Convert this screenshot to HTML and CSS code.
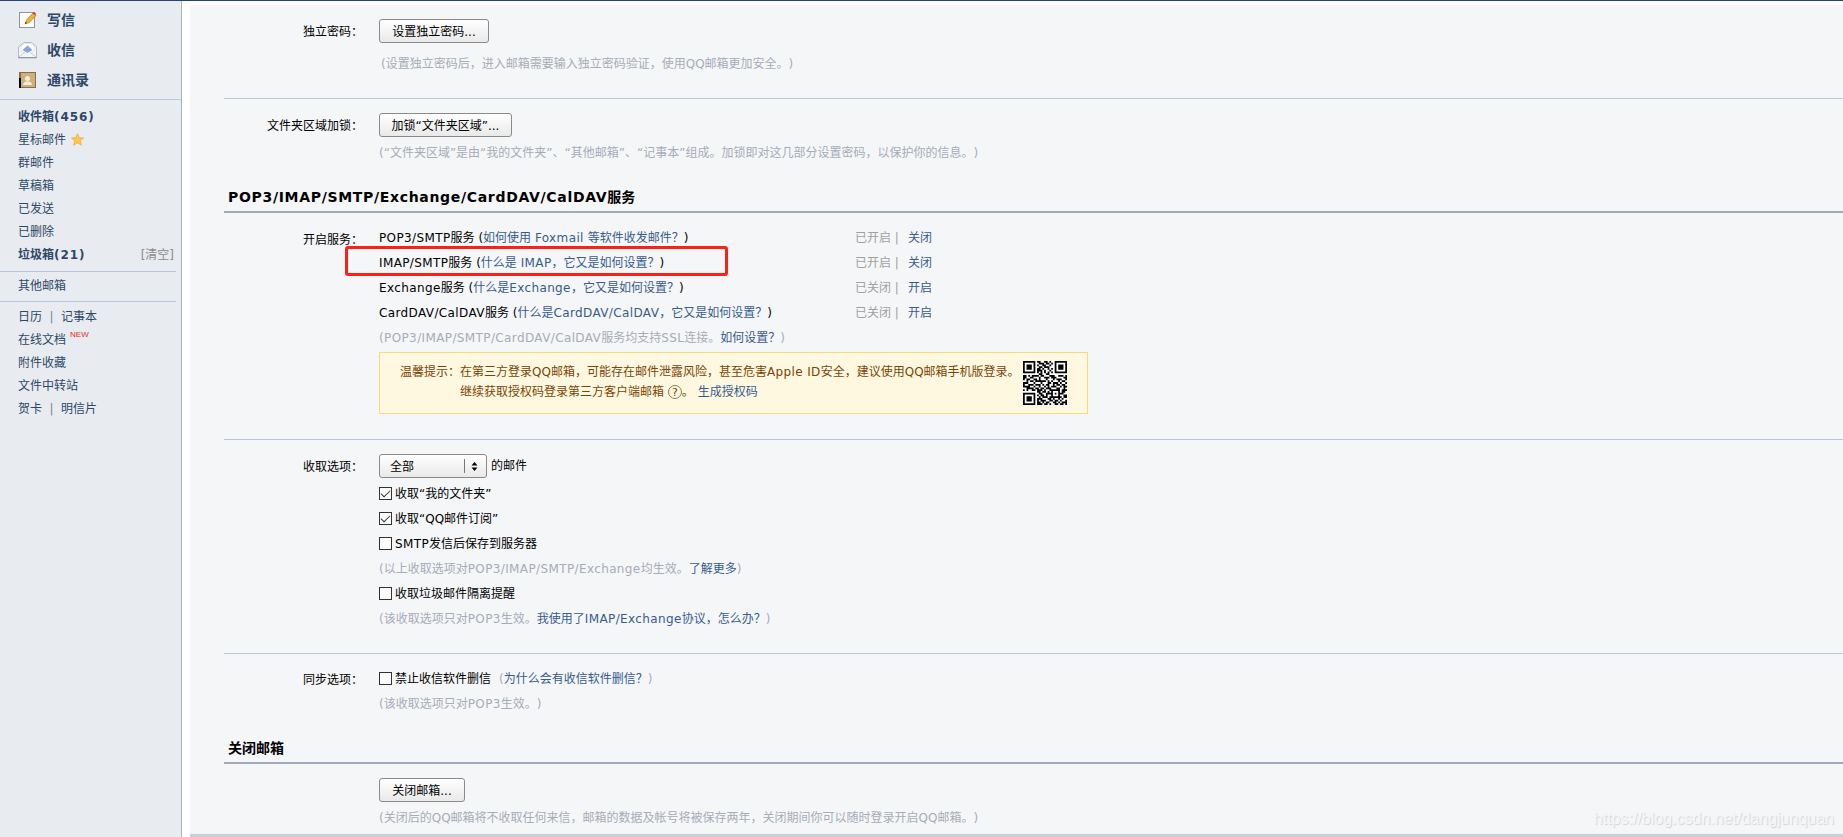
FILE: index.html
```html
<!DOCTYPE html>
<html lang="zh-CN">
<head>
  <meta charset="UTF-8">
  <title>QQ邮箱 - 设置</title>
  <link rel="stylesheet" href="styles.css">
</head>
<body>

  <div class="page">
    <div class="sidebar">
      <ul class="nav-main">
        <li>
          <svg width="20" height="18" viewBox="0 0 20 18">
            <rect x="1.5" y="1.5" width="15" height="15" fill="#fdfdfd" stroke="#8f959c"/>
            <path d="M7 13l1.500-4 6.500-7 3 2.500-6.800 7z" fill="#f3b32c" stroke="#a9761d" stroke-width=".7"/>
            <path d="M14.500 2.500l1.200-1.500 2.500 1.500-1 2z" fill="#dc4444"/>
            <path d="M7 13l.6-2 1.400 1.100z" fill="#333"/>
          </svg>
          写信
        </li>
        <li>
          <svg width="20" height="18" viewBox="0 0 20 18">
            <path d="M.5 6L6 1.500h8L18.500 6v11H.5z" fill="#f4f6f8" stroke="#b4bac2"/>
            <path d="M3 5l4-2.500h6L16 5v5l-6 3.500L3 10z" fill="#fff" stroke="#d5dae0" stroke-width=".6"/>
            <path d="M4.500 9L9.500 4.500 14.500 9l-5 3z" fill="#86a8d6"/>
            <path d="M.5 16.500h18" stroke="#8f979f"/>
            <path d="M1 16l6-5M18 16l-6-5" stroke="#c9ced5" fill="none"/>
          </svg>
          收信
        </li>
        <li>
          <svg width="20" height="18" viewBox="0 0 20 18">
            <rect x="1" y="1" width="17" height="16" fill="#866f4b"/>
            <rect x="3" y="2" width="14" height="14" fill="#cdb07a"/>
            <rect x="1" y="7" width="2" height="10" fill="#000"/>
            <circle cx="9.500" cy="7.500" r="2.500" fill="#f5ecd8"/>
            <path d="M5 14c0-2.500 1.500-3 3-3.500h3c1.500.5 3 1 3 3.500z" fill="#f5ecd8"/>
          </svg>
          通讯录
        </li>
      </ul>
      <ul class="nav-list">
        <li><b>收件箱<span class="num">(456)</span></b></li>
        <li>星标邮件
          <svg class="star" width="13" height="13" viewBox="0 0 13 13"><path d="M6.500.7l1.700 4 4.300.3-3.300 2.800 1.100 4.300-3.800-2.300-3.800 2.300 1.100-4.300L.5 5l4.300-.3z" fill="#fcc94b" stroke="#efa63c" stroke-width=".8"/></svg>
        </li>
        <li>群邮件</li>
        <li>草稿箱</li>
        <li>已发送</li>
        <li>已删除</li>
        <li><b>垃圾箱<span class="num">(21)</span></b><span class="clear">[清空]</span></li>
      </ul>
      <ul class="nav-list nav-other">
        <li>其他邮箱</li>
      </ul>
      <ul class="nav-list nav-tools">
        <li>日历<i>|</i>记事本</li>
        <li>在线文档<sup>NEW</sup></li>
        <li>附件收藏</li>
        <li>文件中转站</li>
        <li>贺卡<i>|</i>明信片</li>
      </ul>
    </div>

    <div class="main">
      <div class="section line">
        <div class="label">独立密码：</div>
        <div class="field">
          <button class="btn btn-pwd">设置独立密码...</button>
          <p class="hint hint-pwd">(设置独立密码后，进入邮箱需要输入独立密码验证，使用QQ邮箱更加安全。)</p>
        </div>
      </div>

      <div class="section">
        <div class="label">文件夹区域加锁：</div>
        <div class="field">
          <button class="btn btn-lock">加锁“文件夹区域”...</button>
          <p class="hint">(“文件夹区域”是由“我的文件夹”、“其他邮箱”、“记事本”组成。加锁即对这几部分设置密码，以保护你的信息。)</p>
        </div>
      </div>

      <h3><span class="en">POP3/IMAP/SMTP/Exchange/CardDAV/CalDAV</span>服务</h3>
      <div class="section service line">
        <div class="label">开启服务：</div>
        <div class="field">
          <div class="row"><div class="name"><span class="en">POP3/SMTP</span>服务 (<a>如何使用 <span class="en">Foxmail</span> 等软件收发邮件？</a>)</div><span class="state">已开启 |</span><a class="act">关闭</a></div>
          <div class="row marked"><div class="name"><span class="en">IMAP/SMTP</span>服务 (<a>什么是 <span class="en">IMAP</span>，它又是如何设置？</a>)</div><span class="state">已开启 |</span><a class="act">关闭</a></div>
          <div class="row"><div class="name"><span class="en">Exchange</span>服务 (<a>什么是<span class="en">Exchange</span>，它又是如何设置？</a>)</div><span class="state">已关闭 |</span><a class="act">开启</a></div>
          <div class="row"><div class="name"><span class="en">CardDAV/CalDAV</span>服务 (<a>什么是<span class="en">CardDAV/CalDAV</span>，它又是如何设置？</a>)</div><span class="state">已关闭 |</span><a class="act">开启</a></div>
          <div class="row gray"><span class="en">(POP3/IMAP/SMTP/CardDAV/CalDAV</span>服务均支持<span class="en">SSL</span>连接。<a>如何设置？</a>)</div>
          <div class="tips">
            <div>温馨提示：</div>
            <div class="tips-text">
              在第三方登录QQ邮箱，可能存在邮件泄露风险，甚至危害<span class="en">Apple ID</span>安全，建议使用QQ邮箱手机版登录。<br>
              继续获取授权码登录第三方客户端邮箱 <span class="help">?</span>。 <a>生成授权码</a>
            </div>
            <svg class="qr" id="qr" width="44" height="44" viewBox="0 0 25 25"></svg>
          </div>
        </div>
      </div>

      <div class="section receive line">
        <div class="label">收取选项：</div>
        <div class="field">
          <div class="select-row">
            <div class="select">
              <span>全部</span>
              <svg width="7" height="9" viewBox="0 0 7 9"><path d="M.5 3.500l3-3.500 3 3.500zM.5 5.500l3 3.500 3-3.500z"/></svg>
            </div>
            的邮件
          </div>
          <div class="row"><span class="check on"></span>收取“我的文件夹”</div>
          <div class="row"><span class="check on"></span>收取“QQ邮件订阅”</div>
          <div class="row"><span class="check"></span><span class="en">SMTP</span>发信后保存到服务器</div>
          <div class="row gray">(以上收取选项对<span class="en">POP3/IMAP/SMTP/Exchange</span>均生效。<a>了解更多</a>)</div>
          <div class="row"><span class="check"></span>收取垃圾邮件隔离提醒</div>
          <div class="row gray">(该收取选项只对<span class="en">POP3</span>生效。<a>我使用了<span class="en">IMAP/Exchange</span>协议，怎么办？</a>)</div>
        </div>
      </div>

      <div class="section sync">
        <div class="label">同步选项：</div>
        <div class="field">
          <div class="row"><span class="check"></span>禁止收信软件删信<span class="why gray">(<a>为什么会有收信软件删信？</a>)</span></div>
          <div class="row gray">(该收取选项只对<span class="en">POP3</span>生效。)</div>
        </div>
      </div>

      <h3>关闭邮箱</h3>
      <div class="section">
        <div class="label"></div>
        <div class="field">
          <button class="btn btn-close">关闭邮箱...</button>
          <p class="hint">(关闭后的QQ邮箱将不收取任何来信，邮箱的数据及帐号将被保存两年，关闭期间你可以随时登录开启QQ邮箱。)</p>
        </div>
      </div>
      <div class="bottom"></div>
    </div>
  </div>

  <div class="watermark">https://blog.csdn.net/dangjunquan</div>

  <script>
    const modules = [
      "1111111011001101001111111",
      "1000001001110110101000001",
      "1011101010011001001011101",
      "1011101001101110001011101",
      "1011101011010010101011101",
      "1000001011101001001000001",
      "1111111010101010101111111",
      "0000000001100110000000000",
      "1101011110110001110011101",
      "1100110001001110111000011",
      "1011001101000100010111001",
      "0010110111111010100010110",
      "1110001000100011011101001",
      "1001110111010110010110110",
      "1111001001001010111001011",
      "0011110110110111000110010",
      "1010011011101001111110111",
      "0000000011011010100010110",
      "1111111001100111101011100",
      "1000001010110100100010011",
      "1011101001011101111111011",
      "1011101011100011010010100",
      "1011101010111001101101001",
      "1000001011010110011010111",
      "1111111011101101001101101"
    ];
    let d = "";
    modules.forEach((line, y) => {
      for (let x = 0; x < line.length; x++) {
        if (line[x] === "1") d += `M${x} ${y}h1v1h-1z`;
      }
    });
    document.getElementById("qr").innerHTML = `<path d="${d}"/>`;
  </script>

</body>
</html>
```
FILE: styles.css
```css
*, *::before, *::after {
  box-sizing: border-box;
}

body {
  margin: 0;
  height: 837px;
  overflow: hidden;
  font: 12px/25px "DejaVu Sans", "Noto Sans CJK SC", sans-serif;
  text-spacing-trim: space-all;
  color: #000;
  background: #fff;
  border-top: 1px solid #25427f;
}

ul, p, h3 {
  margin: 0;
  padding: 0;
  list-style: none;
}

a {
  color: #375c8e;
}

.en {
  letter-spacing: .38px;
}

.page {
  display: flex;
  height: 836px;
}

.sidebar {
  width: 182px;
  flex: none;
  background: #e8ebf0;
  border-right: 1px solid #a9b4c3;
  color: #2d4868;
}

.nav-main {
  height: 99px;
  padding-top: 4px;
  border-bottom: 1px solid #bcc7da;
  font-size: 14px;
  font-weight: bold;
}

.nav-main li {
  display: flex;
  align-items: center;
  gap: 9px;
  height: 30px;
  padding-left: 18px;
}

.nav-list {
  width: 176px;
  padding: 6px 0 4px 18px;
  line-height: 23px;
}

.nav-list li {
  display: flex;
  height: 23px;
}

.nav-list .num {
  letter-spacing: .9px;
}

.nav-list .star {
  margin: 4px 0 0 5px;
}

.nav-list i {
  width: 19px;
  text-align: center;
  font-style: normal;
  color: #7b8491;
}

.nav-list sup {
  margin-left: 4px;
  font: 8px/12px "Liberation Sans", sans-serif;
  color: #e02d22;
}

.clear {
  margin: 0 2px 0 auto;
  color: #8c8c8c;
}

.nav-other {
  height: 31px;
  padding: 3px 0 0 18px;
  border-top: 1px solid #b9c5da;
  border-bottom: 1px solid #b9c5da;
}

.nav-tools {
  padding-top: 4px;
}

.main {
  flex: 1;
  display: flex;
  flex-direction: column;
  margin: 4px 0 0 8px;
  padding-left: 34px;
  background: #f5f6f8;
}

.section {
  display: flex;
  gap: 15px;
  padding-top: 14px;
}

.line {
  border-bottom: 1px solid #bcc6da;
}

.section:first-child {
  padding-bottom: 22px;
}

.label {
  width: 139px;
  flex: none;
  margin-right: 1px;
  padding-top: 1px;
  text-align: right;
}

.btn {
  display: block;
  height: 24px;
  padding: 1px 0 0;
  font: inherit;
  line-height: 22px;
  border: 1px solid #8a8a8a;
  border-radius: 3px;
  background: linear-gradient(#fff, #e9e9e9);
}

.btn-pwd { width: 110px; }
.btn-lock { width: 133px; }
.btn-close { width: 86px; }

.hint {
  margin-top: 4px;
  line-height: 24px;
  color: #a6acb8;
}

.hint-pwd {
  margin-top: 9px;
  padding-left: 2px;
}

.gray {
  color: #a6acb8;
}

h3 {
  margin-top: 20px;
  padding: 0 0 2px 4px;
  font-size: 14px;
  line-height: 24px;
  border-bottom: 2px solid #a0aab8;
}

h3 .en {
  letter-spacing: .68px;
}

.row {
  display: flex;
  align-items: center;
  height: 25px;
  padding-top: 2px;
}

.service {
  padding: 12px 0 25px;
}

.service .label {
  margin-top: 2px;
}

.name {
  width: 476px;
}

.state {
  width: 53px;
  color: #a0a0a0;
}

.marked {
  position: relative;
}

.marked::before {
  content: "";
  position: absolute;
  left: -34px;
  top: -4px;
  width: 383px;
  height: 30px;
  border: 3px solid #ff2015;
  border-radius: 3px;
}

.tips {
  display: flex;
  width: 709px;
  height: 62px;
  margin-top: 2px;
  padding: 9px 0 0 20px;
  line-height: 20px;
  color: #7c4404;
  background: #fff8e1;
  border: 1px solid #f4dc7c;
}

.tips-text {
  width: 563px;
  white-space: nowrap;
}

.help {
  display: inline-block;
  width: 14px;
  height: 14px;
  line-height: 13px;
  font-size: 11px;
  text-align: center;
  border: 1px solid #8d7b52;
  border-radius: 50%;
}

.qr {
  margin-top: -1px;
  background: #fff;
}

.receive {
  padding-bottom: 22px;
}

.select-row {
  display: flex;
  gap: 4px;
  height: 24px;
  margin-bottom: 3px;
  line-height: 24px;
}

.select {
  display: flex;
  align-items: center;
  justify-content: space-between;
  width: 108px;
  padding: 0 8px 0 10px;
  border: 1px solid #8a8a8a;
  border-radius: 3px;
  background: linear-gradient(#fff, #e9e9e9);
}

.select span {
  flex: 1;
  height: 14px;
  line-height: 16px;
  margin-right: 6px;
  border-right: 1px solid #777;
}

.check {
  width: 13px;
  height: 13px;
  margin: -2px 3px 0 0;
  border: 1px solid #333;
  background: #fff;
}

.check.on::after {
  content: "";
  display: block;
  width: 9px;
  height: 5px;
  margin: 2px 0 0 1px;
  border-left: 1px solid #333;
  border-bottom: 1px solid #333;
  transform: rotate(-45deg);
}

.sync {
  padding-top: 12px;
}

.sync .label {
  margin-top: 1px;
}

.why {
  margin-left: 8px;
}

.bottom {
  height: 3px;
  margin: auto 0 0 -34px;
  background: #cad0d9;
}

.watermark {
  position: absolute;
  right: 9px;
  bottom: 6px;
  font: 16px/24px "Liberation Sans", sans-serif;
  color: #f5f6f8;
  text-shadow: 1px 1px 1px #d0d3d8;
}
```
